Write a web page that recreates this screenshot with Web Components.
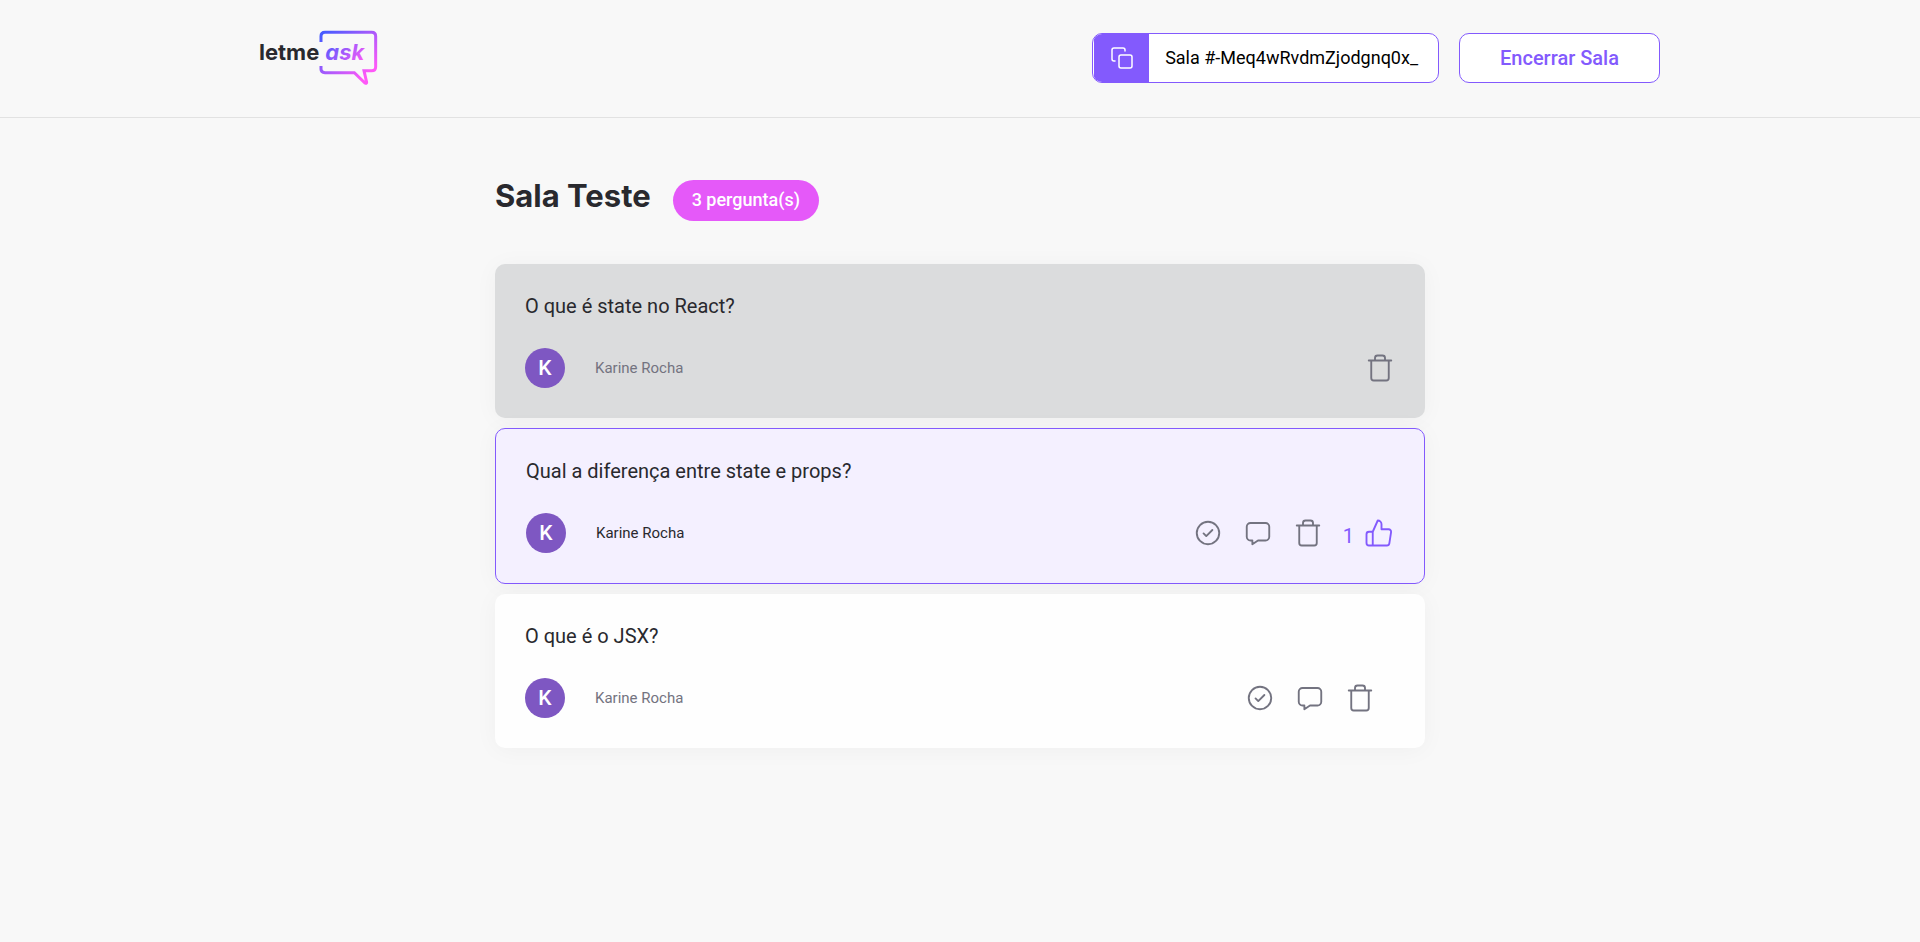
<!DOCTYPE html>
<html lang="pt-BR">
<head>
<meta charset="utf-8">
<meta name="viewport" content="width=device-width, initial-scale=1">
<title>Letmeask</title>
<style>
  body { margin: 0; background: #f8f8f8; color: #29292e; font: 400 16px/24px Roboto, sans-serif; }
</style>
</head>
<body>
<room-page>
  <room-header slot="header" code="-Meq4wRvdmZjodgnq0x_"></room-header>
  <room-title count="3">Sala Teste</room-title>
  <question-card state="answered" author="Karine Rocha">O que é state no React?</question-card>
  <question-card state="highlighted" author="Karine Rocha" likes="1">Qual a diferença entre state e props?</question-card>
  <question-card author="Karine Rocha">O que é o JSX?</question-card>
</room-page>

<script>
const define = (name, render) => customElements.define(name, class extends HTMLElement {
  constructor() {
    super();
    this.attachShadow({ mode: 'open' });
  }
  connectedCallback() {
    this.shadowRoot.innerHTML = render(this);
  }
});

const icons = {
  copy: '<rect x="9" y="9" width="13" height="13" rx="2"/><path d="M5 15H4a2 2 0 0 1-2-2V4a2 2 0 0 1 2-2h9a2 2 0 0 1 2 2v1"/>',
  check: '<circle cx="12" cy="12" r="9"/><path d="M8.44 12.34L10.61 14.5L15.49 9.6"/>',
  answer: '<path d="M12 18H18C19.657 18 21 16.657 21 15V7C21 5.343 19.657 4 18 4H6C4.343 4 3 5.343 3 7V15C3 16.657 4.343 18 6 18H7.5V21L12 18Z"/>',
  trash: '<path d="M3 6H21M8 6V4A2 2 0 0 1 10 2H14A2 2 0 0 1 16 4V6M19 6V20A2 2 0 0 1 17 22H7A2 2 0 0 1 5 20V6H19Z"/>',
  like: '<path d="M7 22H4A2 2 0 0 1 2 20V13A2 2 0 0 1 4 11H7M14 9V5A3 3 0 0 0 11 2L7 11V22H18.28A2 2 0 0 0 20.28 20.3L21.66 11.3A2 2 0 0 0 19.66 9H14Z"/>'
};

define('line-icon', el => `
  <style>
    :host { display: block; width: 30px; height: 30px; }
    svg { display: block; width: 100%; height: 100%; fill: none; stroke: currentColor; stroke-width: 1.5; stroke-linecap: round; stroke-linejoin: round; }
  </style>
  <svg viewBox="0 0 24 24" aria-hidden="true">${icons[el.getAttribute('name')]}</svg>`);

define('brand-logo', () => `
  <style>
    :host { display: block; }
    svg { display: block; width: 118px; height: 56px; overflow: visible; }
    text { font-family: Inter, sans-serif; font-weight: 700; font-size: 66px; }
    .dark { fill: #29292e; }
    .ask { font-style: italic; fill: url(#word); }
  </style>
  <svg viewBox="60 60 354 168" role="img" aria-label="letmeask">
    <defs>
      <linearGradient id="bubble" gradientUnits="userSpaceOnUse" x1="250" y1="70" x2="370" y2="205">
        <stop stop-color="#485bff"/><stop offset="1" stop-color="#ff59f8"/>
      </linearGradient>
      <linearGradient id="word" gradientUnits="userSpaceOnUse" x1="265" y1="85" x2="360" y2="170">
        <stop stop-color="#485bff"/><stop offset="1" stop-color="#ff59f8"/>
      </linearGradient>
    </defs>
    <path d="M243 96V79Q243 67 255 67H395Q407 67 407 79V170Q407 182 395 182H372L380 217Q380 222 375 219L343 188H255Q243 188 243 178V168" fill="none" stroke="url(#bubble)" stroke-width="9"/>
    <text class="dark" x="57" y="150">letme</text>
    <text class="ask" x="256" y="150">ask</text>
  </svg>`);

define('room-code', el => `
  <style>
    :host { display: block; }
    button { display: flex; height: 50px; box-sizing: border-box; padding: 0 0 0 1px; overflow: hidden; border: 1px solid #835afd; border-radius: 10px; background: #fff; color: #000; font: 400 18px/48px Roboto, sans-serif; cursor: pointer; }
    .icon { display: grid; place-items: center; width: 55px; height: 48px; background: #835afd; color: #fff; }
    line-icon { width: 24px; height: 24px; }
    .code { padding: 0 20px 0 16px; }
  </style>
  <button type="button" aria-label="Copiar código da sala">
    <span class="icon"><line-icon name="copy"></line-icon></span>
    <span class="code">Sala #${el.getAttribute('code')}</span>
  </button>`);

define('outline-button', () => `
  <style>
    :host { display: block; }
    button { height: 50px; box-sizing: border-box; padding: 0 40px; border: 1px solid #835afd; border-radius: 10px; background: #fff; color: #835afd; font: 500 20px/24px Roboto, sans-serif; cursor: pointer; }
  </style>
  <button type="button"><slot></slot></button>`);

define('room-header', el => `
  <style>
    :host { display: block; padding: 30px 24px 31px; border-bottom: 1px solid #e2e2e2; }
    .content { display: flex; align-items: center; justify-content: space-between; max-width: 1400px; margin: 0 auto; }
    .actions { display: flex; gap: 20px; }
  </style>
  <div class="content">
    <brand-logo></brand-logo>
    <div class="actions">
      <room-code code="${el.getAttribute('code')}"></room-code>
      <outline-button>Encerrar Sala</outline-button>
    </div>
  </div>`);

define('room-title', el => `
  <style>
    :host { display: flex; align-items: flex-end; gap: 22px; height: 45px; }
    h1 { margin: 0; align-self: flex-start; font: 700 31px/40px Inter, sans-serif; }
    span { padding: 8px 19px 9px; border-radius: 24px; background: #e559f9; color: #fff; font: 500 18px/24px Roboto, sans-serif; }
  </style>
  <h1><slot></slot></h1>
  <span>${el.getAttribute('count')} pergunta(s)</span>`);

define('user-info', el => `
  <style>
    :host { display: flex; align-items: center; gap: 30px; color: #737380; }
    :host([strong]) { color: #29292e; }
    .avatar { width: 40px; height: 40px; border-radius: 50%; background: #7e57c2; color: #fff; text-align: center; font: 500 21px/40px Roboto, sans-serif; }
    .name { font-size: 15px; line-height: 24px; }
  </style>
  <span class="avatar" aria-hidden="true">${el.getAttribute('name')[0]}</span>
  <span class="name">${el.getAttribute('name')}</span>`);

define('icon-button', el => `
  <style>
    :host { display: block; }
    button { display: flex; align-items: flex-end; gap: 10px; padding: 0; border: 0; background: none; color: #737380; font: 400 20px/24px Roboto, sans-serif; cursor: pointer; }
    :host([active]) button { color: #835afd; }
  </style>
  <button type="button" aria-label="${el.getAttribute('label')}"><slot></slot><line-icon name="${el.getAttribute('icon')}"></line-icon></button>`);

define('question-card', el => {
  const state = el.getAttribute('state');
  const likes = el.getAttribute('likes');
  return `
  <style>
    :host { display: block; padding: 30px; border-radius: 10px; background: #fefefe; box-shadow: 0 2px 24px rgba(0, 0, 0, .04); }
    :host([state="answered"]) { background: #dbdcdd; }
    :host([state="highlighted"]) { border: 1px solid #835afd; background: #f4f0ff; }
    p { margin: 0 0 30px; font-size: 20px; line-height: 24px; }
    footer, .actions { display: flex; align-items: center; justify-content: space-between; }
    .actions { gap: 20px; }
  </style>
  <p><slot></slot></p>
  <footer>
    <user-info name="${el.getAttribute('author')}" ${state === 'highlighted' ? 'strong' : ''}></user-info>
    <div class="actions">
      ${state === 'answered' ? '' : `
      <icon-button icon="check" label="Marcar como respondida"></icon-button>
      <icon-button icon="answer" label="Destacar pergunta"></icon-button>`}
      <icon-button icon="trash" label="Remover pergunta"></icon-button>
      ${likes ? `<icon-button active icon="like" label="${likes} curtida">${likes}</icon-button>` : state === 'answered' ? '' : '<span></span>'}
    </div>
  </footer>`;
});

define('room-page', () => `
  <style>
    :host { display: block; }
    main { max-width: 930px; margin: 0 auto; padding: 58px 24px 40px; }
    .list { display: flex; flex-direction: column; gap: 10px; }
    ::slotted(room-title) { margin-bottom: 33px; }
  </style>
  <slot name="header"></slot>
  <main><div class="list"><slot></slot></div></main>`);
</script>
</body>
</html>
